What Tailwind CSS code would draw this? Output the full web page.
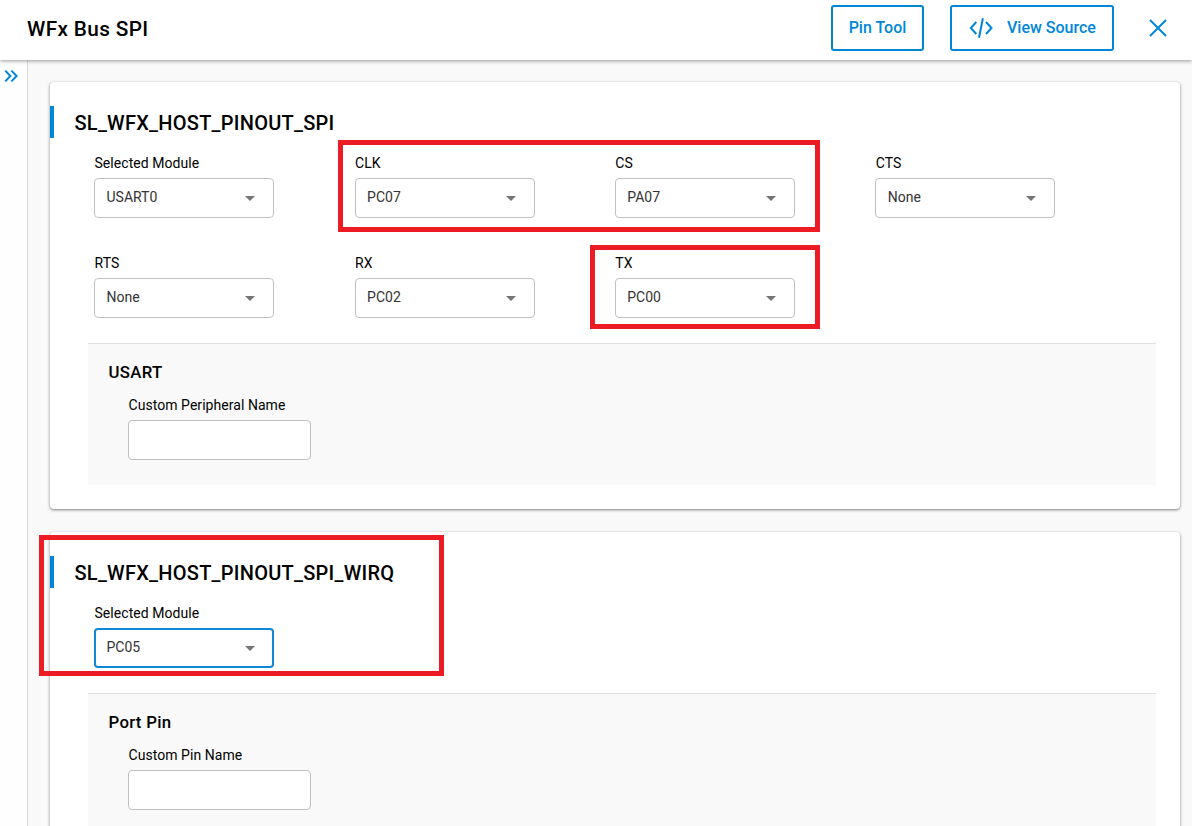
<!DOCTYPE html>
<html lang="en">
<head>
<meta charset="utf-8">
<title>WFx Bus SPI</title>
<script src="https://cdn.jsdelivr.net/npm/@tailwindcss/browser@4"></script>
</head>
<body class="relative flex h-[826px] w-[1192px] flex-col overflow-hidden bg-[#f9f9f9] font-[Roboto,sans-serif] text-sm text-black">
  <header class="relative z-10 flex h-[60px] shrink-0 items-center bg-white pr-6 pl-[27px] shadow-[0_1px_4px_rgba(0,0,0,0.4)]">
    <h1 class="mb-[3px] flex-1 text-[20.800px] leading-7 font-medium tracking-[0.350px]">WFx Bus SPI</h1>
    <button class="mb-1 flex h-[46px] w-[93px] items-center justify-center rounded-[3px] border-2 border-[#0086d9] pb-px text-base font-medium text-[#0086d9]">Pin Tool</button>
    <button class="mb-1 ml-[26px] flex h-[46px] w-[164px] items-center rounded-[3px] border-2 border-[#0086d9] pb-px pl-[17px] text-base font-medium text-[#0086d9]">
      <svg class="mt-px mr-[14px] h-6 w-6" viewBox="0 0 24 24" fill="none" stroke="currentColor" stroke-width="2"><path d="M7.3 6 1.8 12l5.500 6M17 6l5.500 6-5.500 6M13.900 2.200 10 21.800"/></svg>
      View Source
    </button>
    <button class="mb-1 ml-[34px] text-[#0086d9]"><svg class="h-5 w-5" viewBox="0 0 20 20" fill="none" stroke="currentColor" stroke-width="2"><path d="m2 2 16 16M18 2 2 18"/></svg></button>
  </header>
  <div class="flex min-h-0 flex-1">
    <aside class="w-7 shrink-0 border-r border-[#dadada] bg-[#fefefe] pt-[9px] pl-1">
      <svg class="h-[14px] w-[15px]" viewBox="0 0 15 14" fill="none" stroke="#0086d9" stroke-width="2"><path d="m1.200 1.600 5.200 5.400-5.200 5.400M7.400 1.600 12.600 7l-5.200 5.400"/></svg>
    </aside>
    <main class="flex-1 overflow-hidden pt-[22px] pr-3 pl-[22px]">
      <section class="rounded bg-white py-6 shadow-[0_1px_3px_rgba(0,0,0,0.5)]">
        <div class="flex h-8 items-center border-l-4 border-[#0086d9] pl-[20.500px]"><h2 class="mt-0.5 text-xl font-medium tracking-[0.25px]">SL_WFX_HOST_PINOUT_SPI</h2></div>
        <div class="mt-[15px] ml-11 grid grid-cols-[repeat(4,180px)] gap-x-[80.400px] gap-y-[35px]">
          <div><div class="mb-[5px] h-5 pl-[0.500px] leading-5 tracking-[0.05px]">Selected Module</div><div class="flex h-10 items-center justify-between rounded border border-[#c0c0c0] pr-[18px] pb-0.5 pl-[11.500px] text-[#333]"><span>USART0</span><svg class="mt-[3px] h-[5px] w-[10px]" viewBox="0 0 10 5"><path d="M0 0h10L5 5z" fill="#757575"/></svg></div></div>
          <div class="ml-[0.200px] -mr-[0.200px]"><div class="mb-[5px] h-5 pl-[0.500px] leading-5 tracking-[0.05px]">CLK</div><div class="flex h-10 items-center justify-between rounded border border-[#c0c0c0] pr-[18px] pb-0.5 pl-[11.500px] text-[#333]"><span>PC07</span><svg class="mt-[3px] h-[5px] w-[10px]" viewBox="0 0 10 5"><path d="M0 0h10L5 5z" fill="#757575"/></svg></div></div>
          <div><div class="mb-[5px] h-5 pl-[0.500px] leading-5 tracking-[0.05px]">CS</div><div class="flex h-10 items-center justify-between rounded border border-[#c0c0c0] pr-[18px] pb-0.5 pl-[11.500px] text-[#333]"><span>PA07</span><svg class="mt-[3px] h-[5px] w-[10px]" viewBox="0 0 10 5"><path d="M0 0h10L5 5z" fill="#757575"/></svg></div></div>
          <div><div class="mb-[5px] h-5 pl-[0.500px] leading-5 tracking-[0.05px]">CTS</div><div class="flex h-10 items-center justify-between rounded border border-[#c0c0c0] pr-[18px] pb-0.5 pl-[11.500px] text-[#333]"><span>None</span><svg class="mt-[3px] h-[5px] w-[10px]" viewBox="0 0 10 5"><path d="M0 0h10L5 5z" fill="#757575"/></svg></div></div>
          <div><div class="mb-[5px] h-5 pl-[0.500px] leading-5 tracking-[0.05px]">RTS</div><div class="flex h-10 items-center justify-between rounded border border-[#c0c0c0] pr-[18px] pb-0.5 pl-[11.500px] text-[#333]"><span>None</span><svg class="mt-[3px] h-[5px] w-[10px]" viewBox="0 0 10 5"><path d="M0 0h10L5 5z" fill="#757575"/></svg></div></div>
          <div class="ml-[0.200px] -mr-[0.200px]"><div class="mb-[5px] h-5 pl-[0.500px] leading-5 tracking-[0.05px]">RX</div><div class="flex h-10 items-center justify-between rounded border border-[#c0c0c0] pr-[18px] pb-0.5 pl-[11.500px] text-[#333]"><span>PC02</span><svg class="mt-[3px] h-[5px] w-[10px]" viewBox="0 0 10 5"><path d="M0 0h10L5 5z" fill="#757575"/></svg></div></div>
          <div><div class="mb-[5px] h-5 pl-[0.500px] leading-5 tracking-[0.05px]">TX</div><div class="flex h-10 items-center justify-between rounded border border-[#c0c0c0] pr-[18px] pb-0.5 pl-[11.500px] text-[#333]"><span>PC00</span><svg class="mt-[3px] h-[5px] w-[10px]" viewBox="0 0 10 5"><path d="M0 0h10L5 5z" fill="#757575"/></svg></div></div>
        </div>
        <div class="mt-[25px] mr-6 ml-[38px] h-[142px] border-t border-[#dedede] bg-[#f9f9f9] pt-4 pl-5">
          <h3 class="pl-[0.500px] text-[16.800px] leading-6 font-medium tracking-[0.300px]">USART</h3>
          <div class="mt-[11px] ml-5 h-5 pl-[0.500px] leading-5 tracking-[0.05px]">Custom Peripheral Name</div>
          <div class="mt-[5px] ml-5 h-10 w-[183px] rounded border border-[#c0c0c0] bg-white"></div>
        </div>
      </section>
      <section class="mt-[23px] rounded bg-white py-6 shadow-[0_1px_3px_rgba(0,0,0,0.5)]">
        <div class="flex h-8 items-center border-l-4 border-[#0086d9] pl-[20.500px]"><h2 class="mt-0.5 text-xl font-medium tracking-[0.25px]">SL_WFX_HOST_PINOUT_SPI_WIRQ</h2></div>
        <div class="mt-[15px] ml-11 w-[180px]"><div class="mb-[5px] h-5 pl-[0.500px] leading-5 tracking-[0.05px]">Selected Module</div><div class="flex h-10 items-center justify-between rounded border-2 border-[#0f88d4] pr-[17px] pb-0.5 pl-[10.500px] text-[#333]"><span>PC05</span><svg class="mt-[3px] h-[5px] w-[10px]" viewBox="0 0 10 5"><path d="M0 0h10L5 5z" fill="#757575"/></svg></div></div>
        <div class="mt-[25px] mr-6 ml-[38px] h-[142px] border-t border-[#dedede] bg-[#f9f9f9] pt-4 pl-5">
          <h3 class="pl-[0.500px] text-[16.800px] leading-6 font-medium tracking-[0.300px]">Port Pin</h3>
          <div class="mt-[11px] ml-5 h-5 pl-[0.500px] leading-5 tracking-[0.05px]">Custom Pin Name</div>
          <div class="mt-[5px] ml-5 h-10 w-[183px] rounded border border-[#c0c0c0] bg-white"></div>
        </div>
      </section>
    </main>
  </div>
  <!-- Highlight frames over the pin settings -->
  <div class="absolute top-[140px] left-[338px] h-[92px] w-[482px] border-5 border-[#ed1c24]"></div>
  <div class="absolute top-[245px] left-[590px] h-[84px] w-[230px] border-5 border-[#ed1c24]"></div>
  <div class="absolute top-[535px] left-[39px] h-[141px] w-[405px] border-5 border-[#ed1c24]"></div>
</body>
</html>
